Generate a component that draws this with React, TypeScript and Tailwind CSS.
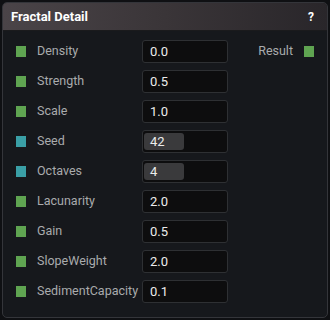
import React from "react";

type Row = { label: string; value: string; kind: "float" | "int"; fill?: number };

const rows: Row[] = [
  { label: "Density", value: "0.0", kind: "float" },
  { label: "Strength", value: "0.5", kind: "float" },
  { label: "Scale", value: "1.0", kind: "float" },
  { label: "Seed", value: "42", kind: "int", fill: 40 },
  { label: "Octaves", value: "4", kind: "int", fill: 40 },
  { label: "Lacunarity", value: "2.0", kind: "float" },
  { label: "Gain", value: "0.5", kind: "float" },
  { label: "SlopeWeight", value: "2.0", kind: "float" },
  { label: "SedimentCapacity", value: "0.1", kind: "float" },
];

export default function App() {
  return (
    <div
      className="w-[330px] h-[320px] bg-[#0f1013] p-[2px]"
      style={{ fontFamily: "Roboto, 'Noto Sans', sans-serif" }}
    >
      <div className="w-full h-full rounded-[5px] border border-[#34353a] bg-[#16181c] overflow-hidden flex flex-col">
        <div className="h-[28px] flex items-center justify-between pl-[8px] pr-[13px] bg-gradient-to-r from-[#4a4448] via-[#3a3538] to-[#29262a] border-b border-[#1a1a1c] shrink-0">
          <span className="text-white font-bold text-[13px] leading-none">Fractal Detail</span>
          <span className="text-white font-bold text-[12px] leading-none">?</span>
        </div>
        <div className="flex pt-[9px] pl-[13px] pr-[13px]">
          <div className="flex flex-col gap-[7px]">
            {rows.map((r) => (
              <div key={r.label} className="flex items-center h-[23px]">
                <div
                  className={
                    "w-[10px] h-[11px] " + (r.kind === "int" ? "bg-[#3a9fa6]" : "bg-[#5fa451]")
                  }
                />
                <span className="ml-[11px] w-[105px] text-[12.5px] text-[#a9abad] leading-none whitespace-nowrap">
                  {r.label}
                </span>
                <div className="relative w-[86px] h-[23px] rounded-[3px] border border-[#2e3033] bg-[#0d0d0e] flex items-center">
                  {r.fill !== undefined && (
                    <div
                      className="absolute left-[1px] top-[2px] bottom-[2px] rounded-[3px] bg-[#3a3a3c]"
                      style={{ width: r.fill }}
                    />
                  )}
                  <span className="relative pl-[7px] text-[13px] text-[#ececec] leading-none">
                    {r.value}
                  </span>
                </div>
              </div>
            ))}
          </div>
          <div className="flex-1 flex justify-end">
            <div className="flex items-center h-[23px]">
              <span className="text-[12.5px] text-[#a9abad] leading-none">Result</span>
              <div className="ml-[11px] w-[10px] h-[11px] bg-[#5fa451]" />
            </div>
          </div>
        </div>
      </div>
    </div>
  );
}
